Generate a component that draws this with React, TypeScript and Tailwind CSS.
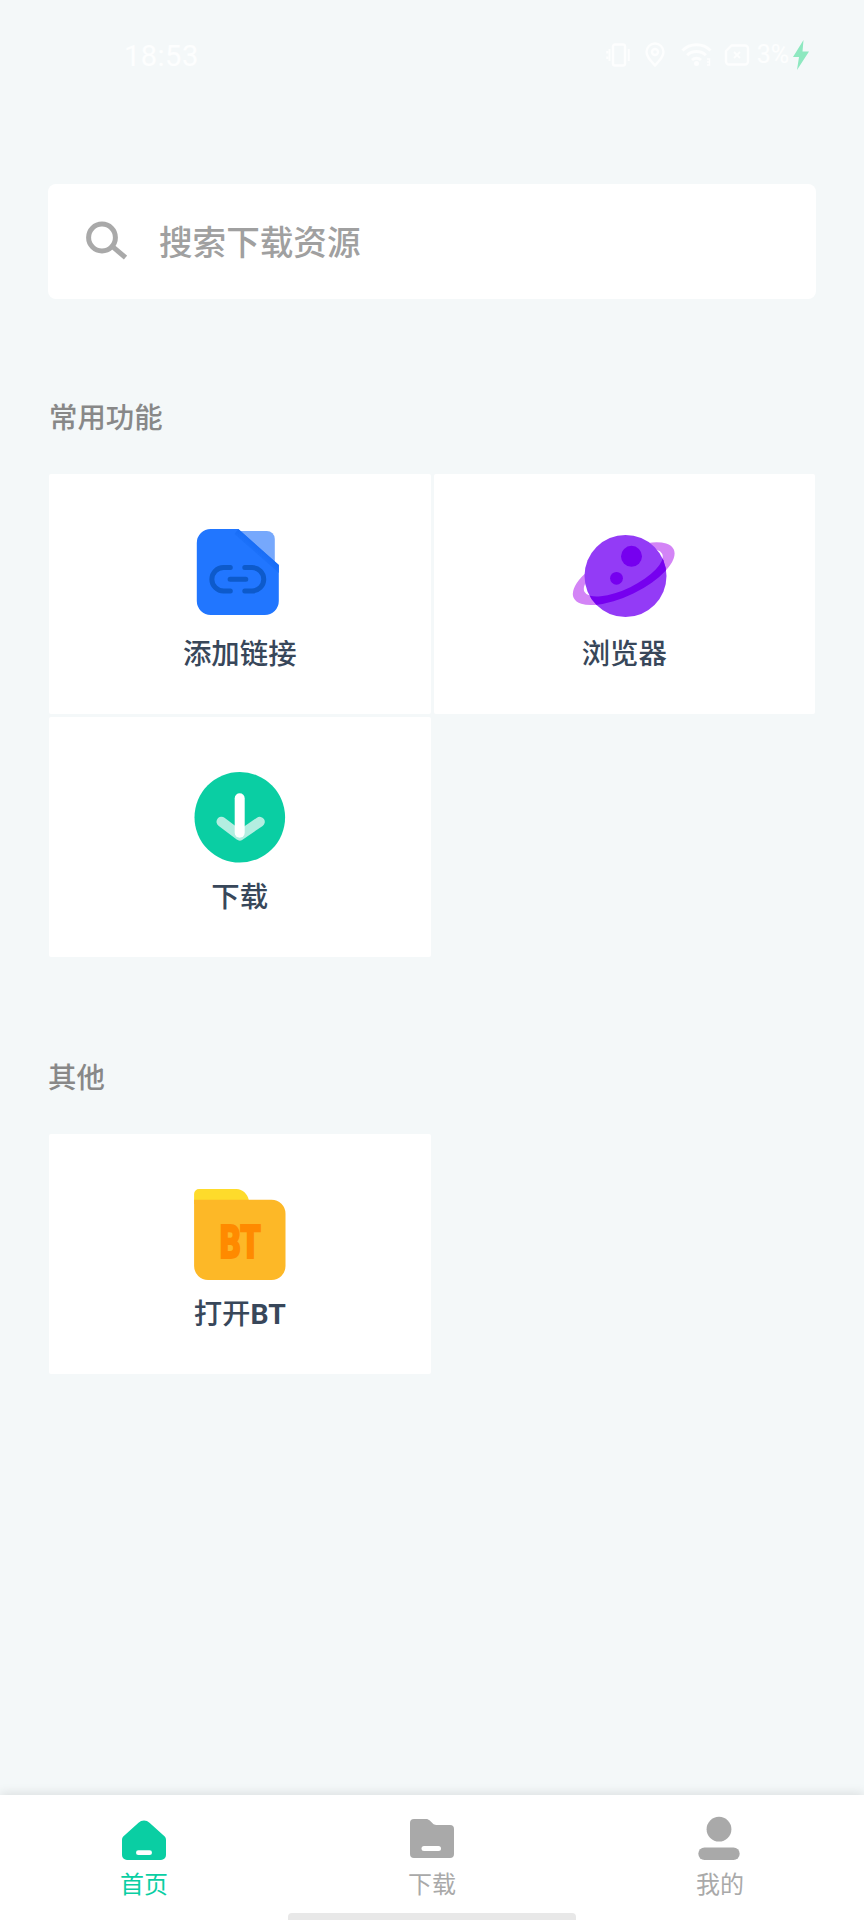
import React from "react";

const StatusBar: React.FC = () => (
  <div className="flex h-[110px] items-center justify-between pl-[124px] pr-[54px] text-white/80">
    <span className="pt-px text-[29px] leading-8 tracking-[0.5px]">18:53</span>
    <div className="flex items-center">
      {/* Vibrate */}
      <svg className="mr-[13px] h-[26px] w-[26px]" viewBox="0 0 26 26" fill="none" stroke="currentColor" strokeWidth="2.4">
        <rect x="7" y="2.500" width="12" height="21" rx="2" />
        <path d="M3.500 7v12M22.800 7v12M1.200 9v2.500M1.200 14.500V17" strokeWidth="2" />
      </svg>
      {/* Location */}
      <svg className="mr-[16px] h-[26px] w-[20px]" viewBox="0 0 20 26" fill="none" stroke="currentColor" strokeWidth="2.4">
        <path d="M10 23.500C5 18 1.500 14.500 1.500 10a8.500 8.500 0 0 1 17 0c0 4.500-3.500 8-8.500 13.500Z" />
        <circle cx="10" cy="10" r="3" />
      </svg>
      {/* Wifi */}
      <svg className="mr-[11px] h-[26px] w-[32px]" viewBox="0 0 32 26" fill="none" stroke="currentColor" strokeWidth="3">
        <path d="M1.500 8.500C9 .8 22 .8 29.500 8.500M6.200 13.200c5-5 13.600-5 18.600 0M11 18c2.500-2.300 6.500-2.300 9 0" />
        <circle cx="15.500" cy="21.500" r="2.500" fill="currentColor" stroke="none" />
        <path d="M26 17h2.500v6H26M28.500 20H26" strokeWidth="1.500" />
      </svg>
      {/* Sim */}
      <svg className="mr-[7px] h-[24px] w-[26px]" viewBox="0 0 26 24" fill="none" stroke="currentColor" strokeWidth="2.4">
        <path d="M7.500 2.500H21a3 3 0 0 1 3 3v13a3 3 0 0 1-3 3H5a3 3 0 0 1-3-3V8Z" strokeLinejoin="round" />
        <path d="M10 9L16 15M16 9L10 15" strokeWidth="1.800" />
      </svg>
      <span className="text-[25px] leading-8">3%</span>
      <svg className="ml-[3px] h-[30px] w-[18px] text-[#8ee8c0]" viewBox="0 0 18 30" fill="currentColor">
        <path d="M11.500 0 1 17h6L5 30 17 11.500h-6.500Z" />
      </svg>
    </div>
  </div>
);

const LinkIcon = () => (
  <svg className="h-[100px] w-[110px]" viewBox="0.700 0 110 100" fill="none">
    <defs>
      <linearGradient id="fold" x1="74" y1="23" x2="65" y2="33" gradientUnits="userSpaceOnUse">
        <stop offset="0" stopColor="#186df6" />
        <stop offset="1" stopColor="#2176ff" />
      </linearGradient>
    </defs>
    <path d="M50 7h32.500a8 8 0 0 1 8 8v30H50Z" fill="#76a8fc" />
    <path d="M26.500 5h27.500L94.500 41v36a14 14 0 0 1-14 14h-54a14 14 0 0 1-14-14V19a14 14 0 0 1 14-14Z" fill="#2176ff" />
    <path d="M54 5 94.500 41v8L50 10Z" fill="url(#fold)" />
    <g stroke="#0d5acb" strokeWidth="5" strokeLinecap="round">
      <path d="M46 43.500h-6.700a11.750 11.750 0 0 0 0 23.500H46M60.500 43.500h7.200a11.750 11.750 0 0 1 0 23.500h-7.200M45.800 55.200h15.700" />
    </g>
  </svg>
);

const PlanetIcon = () => (
  <svg className="h-[100px] w-[110px]" viewBox="-0.300 0 110 100" fill="none">
    <clipPath id="planet">
      <circle cx="56.200" cy="52" r="41" />
    </clipPath>
    <g transform="translate(54.400 49.700) rotate(-26)">
      <path
        fillRule="evenodd"
        fill="#d384f6"
        d="M-55.600 0a55.600 22 0 1 1 111.200 0a55.600 22 0 1 1-111.200 0ZM-43.200 -1a43.200 16 0 1 0 86.400 0a43.200 16 0 1 0-86.400 0Z"
      />
    </g>
    <circle cx="56.200" cy="52" r="41" fill="#933bf6" />
    <g clipPath="url(#planet)">
      <path
        transform="translate(54.400 49.700) rotate(-26)"
        d="M-55.600 0A55.600 22 0 0 0 55.600 0L43.200-1A43.200 16 0 0 1-43.200-1Z"
        fill="#7600ef"
      />
    </g>
    <circle cx="62.200" cy="32.300" r="10.500" fill="#7600ef" />
    <circle cx="47.200" cy="54.300" r="6.400" fill="#7600ef" />
  </svg>
);

const DownloadIcon = () => (
  <svg className="h-[100px] w-[110px]" viewBox="0.700 0 110 100" fill="none" strokeWidth="10" strokeLinecap="round" strokeLinejoin="round">
    <circle cx="55.500" cy="50.300" r="45.300" fill="#0acea3" />
    <path d="M37.200 54.800 55.400 68.600 75.500 54.800" stroke="#b3eee1" />
    <path d="M55.400 31.200v34.600" stroke="#fff" />
  </svg>
);

const TorrentIcon = () => (
  <svg className="h-[100px] w-[110px]" viewBox="0.700 0 110 100">
    <path d="M9.800 20V10a5 5 0 0 1 5-5h37.500c6 0 11 5 12.200 11v4Z" fill="#fedb2b" />
    <path d="M9.800 15.700h77.400a14 14 0 0 1 14 14V82a14 14 0 0 1-14 14H23.800a14 14 0 0 1-14-14Z" fill="#fdb827" />
    <text
      x="35.500"
      y="74"
      textLength="41"
      lengthAdjust="spacingAndGlyphs"
      fill="#ff8a00"
      stroke="#ff8a00"
      strokeWidth="2"
      className="font-['Roboto','Liberation_Sans',sans-serif] text-[46px] font-black"
    >
      BT
    </text>
  </svg>
);

const HomeIcon = () => (
  <svg className="h-12 w-12" viewBox="0 0 48 48">
    <path d="M18.500 7.800a8 8 0 0 1 11 0L44.200 21c1.200 1.100 1.800 2.300 1.800 4v15a5 5 0 0 1-5 5H7a5 5 0 0 1-5-5V25c0-1.700.6-2.900 1.800-4Z" fill="currentColor" />
    <rect x="16" y="35.300" width="16" height="4.800" rx="2.400" fill="#fff" />
  </svg>
);

const FolderIcon = () => (
  <svg className="h-12 w-12" viewBox="0 0 48 48">
    <path d="M6 4h12c1.600 0 2.700.5 3.800 1.600l3 3c1 1 2 1.400 3.400 1.400H42a4 4 0 0 1 4 4v25a4 4 0 0 1-4 4H6a4 4 0 0 1-4-4V8a4 4 0 0 1 4-4Z" fill="currentColor" />
    <rect x="13.500" y="31" width="19.500" height="5" rx="2.500" fill="#fff" />
  </svg>
);

const UserIcon = () => (
  <svg className="h-12 w-12" viewBox="0 0 48 48" fill="currentColor">
    <circle cx="23" cy="14.200" r="12.400" />
    <rect x="2.300" y="32.500" width="41.400" height="12.500" rx="6.250" />
  </svg>
);

const Card: React.FC<{ icon: React.ReactNode; label: React.ReactNode }> = ({ icon, label }) => (
  <button className="flex h-[240px] flex-col items-center rounded-[2px] bg-white pt-[50px]">
    {icon}
    <span className="mt-[11px] text-[28.400px] font-medium leading-10 text-[#38475a]">{label}</span>
  </button>
);

const tabs = [
  { label: "首页", icon: <HomeIcon />, color: "text-[#0acea3]" },
  { label: "下载", icon: <FolderIcon />, color: "text-[#a9a9a9]" },
  { label: "我的", icon: <UserIcon />, color: "text-[#a9a9a9]" },
];

const App: React.FC = () => {
  return (
    <div className="flex h-[1920px] w-[864px] flex-col overflow-hidden bg-[#f4f8f9] font-['Roboto','Noto_Sans_CJK_SC',sans-serif]">
      <StatusBar />

      <main className="flex-1 px-12 pt-[74px]">
        {/* Search */}
        <div className="flex h-[115px] items-center rounded-lg bg-white pl-[37px]">
          <svg className="mb-[2px] h-[42px] w-[42px]" viewBox="0 0 42 42" fill="none" stroke="#a9a9a9" strokeWidth="5">
            <circle cx="17" cy="17.500" r="13.400" />
            <path d="M27 26.200 40.500 37.600" />
          </svg>
          <span className="ml-[32px] mt-[5px] text-[33.600px] font-medium leading-[48px] text-[#a0a0a0]">搜索下载资源</span>
        </div>

        {/* Common tools */}
        <h2 className="ml-px mt-[100px] text-[28.400px] font-medium leading-10 text-[#888]">常用功能</h2>
        <div className="mx-px mt-[35px] grid grid-cols-2 gap-[3px]">
          <Card icon={<LinkIcon />} label="添加链接" />
          <Card icon={<PlanetIcon />} label="浏览器" />
          <Card icon={<DownloadIcon />} label="下载" />
        </div>

        {/* Other */}
        <h2 className="mt-[102px] text-[28.400px] font-medium leading-10 text-[#888]">其他</h2>
        <div className="mx-px mt-[35px] grid grid-cols-2 gap-[3px]">
          <Card icon={<TorrentIcon />} label={<>打开<b>BT</b></>} />
        </div>
      </main>

      {/* Tab bar */}
      <nav className="relative grid h-[125px] grid-cols-3 bg-white pt-5 shadow-[0_-2px_10px_rgba(0,0,0,0.1)]">
        {tabs.map((tab, i) => (
          <a key={i} href="#" className={`flex flex-col items-center ${tab.color}`}>
            {tab.icon}
            <span className="mt-[6px] text-[24px] leading-8">{tab.label}</span>
          </a>
        ))}
        <div className="absolute bottom-0 left-1/3 h-[7px] w-1/3 rounded-t bg-[#e8e8e8]" />
      </nav>
    </div>
  );
};

export default App;
